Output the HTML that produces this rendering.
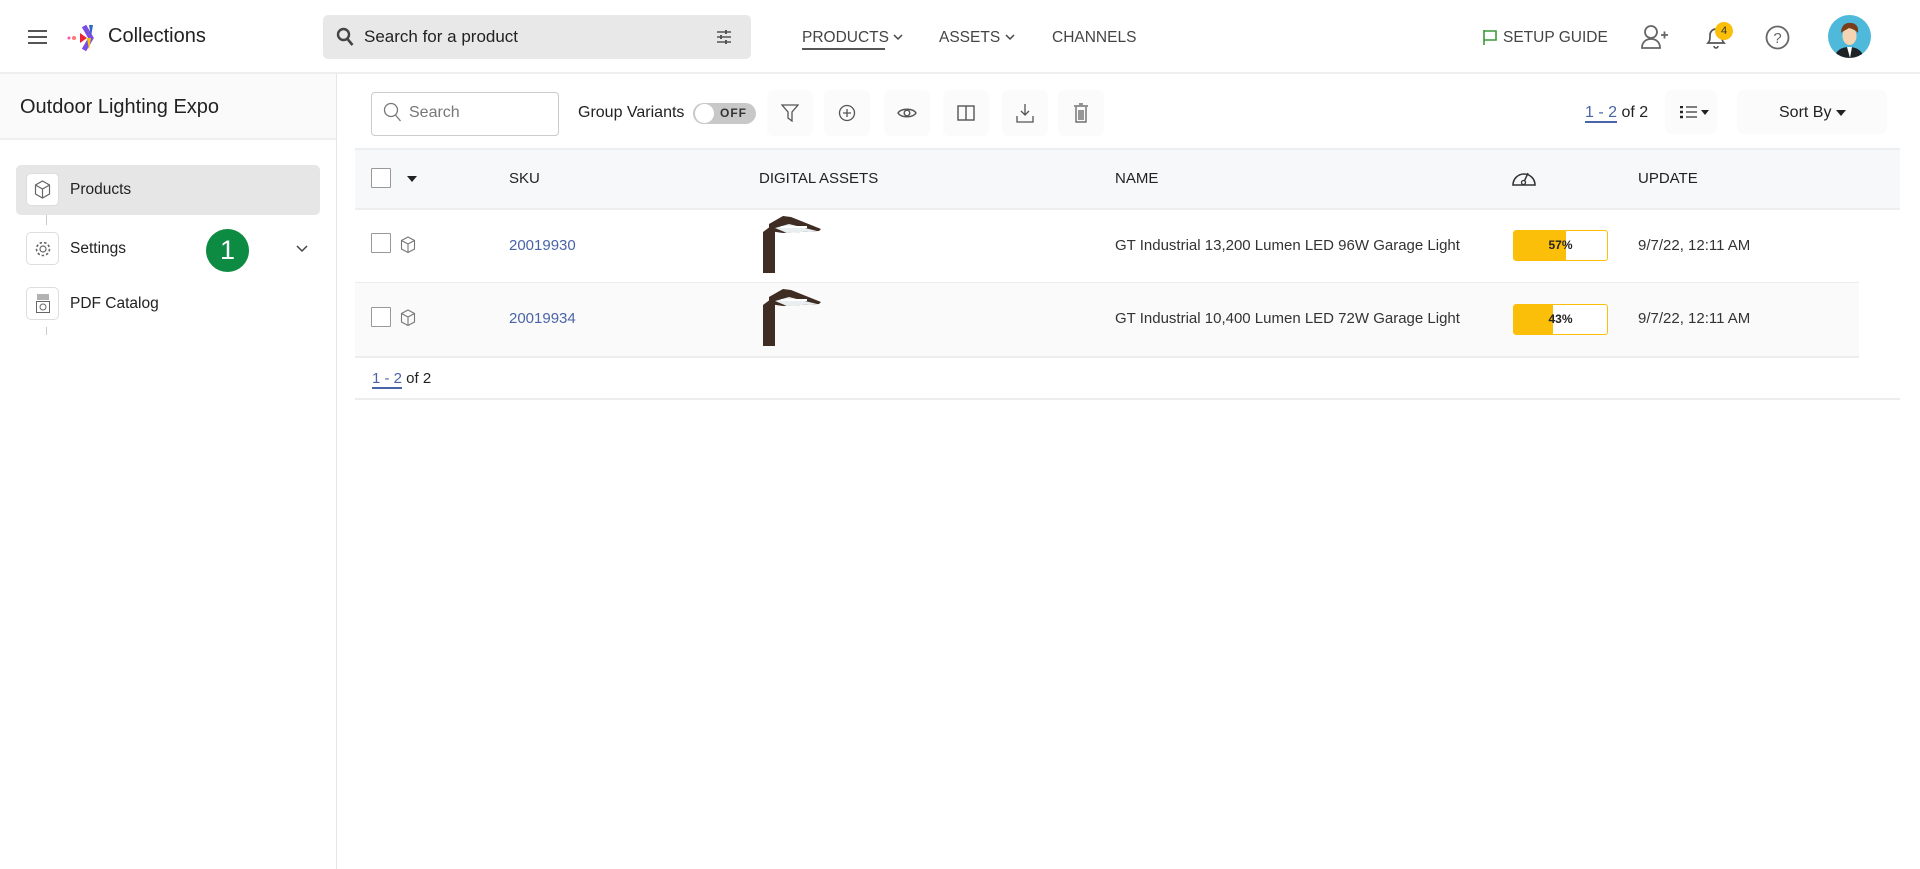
<!DOCTYPE html>
<html><head><meta charset="utf-8"><style>
*{box-sizing:border-box;margin:0;padding:0}
body{width:1920px;height:869px;overflow:hidden;background:#fff;font-family:"Liberation Sans",sans-serif;color:#222;position:relative}
.a{position:absolute}
.hdr{left:0;top:0;width:1920px;height:74px;border-bottom:2px solid #eef0f0}
.nav{font-size:15.5px;color:#444;top:29px}
.side{left:0;top:74px;width:337px;height:795px;border-right:1px solid #e6e6e6}
.ib{width:33px;height:33px;border:1px solid #ddd;border-radius:5px;background:#fff;display:flex;align-items:center;justify-content:center}
.si{font-size:15.5px;color:#222}
.tb{width:46px;height:46px;top:90px;background:#fbfbfb;border-radius:6px;display:flex;align-items:center;justify-content:center}
.th{font-size:15px;color:#222;top:170px}
.cb{width:20px;height:20px;border:1.5px solid #999;background:#fff;border-radius:1px}
.td{font-size:15px;color:#333}
.bar{width:95px;height:31px;border:1.5px solid #fbbf0a;border-radius:3px;background:#fff;overflow:hidden}
.bar i{position:absolute;left:0;top:0;bottom:0;background:#fbbf0a}
.bar b{position:absolute;left:0;right:0;top:0;line-height:28px;text-align:center;font-size:12px;color:#222}
</style></head><body>

<div class="a hdr"></div>
<svg class="a" style="left:28px;top:29px" width="19" height="16"><path d="M0 2h19M0 8h19M0 14h19" stroke="#555" stroke-width="2"/></svg>
<svg class="a" style="left:67px;top:23px" width="32" height="30" viewBox="0 0 32 30">
<circle cx="2" cy="15" r="1.5" fill="#f5a"/><circle cx="7" cy="15" r="2" fill="#f77"/>
<path d="M13 10 L20 15 L13 20Z" fill="#e23"/><path d="M17 3 L24 15 L17 27" stroke="#7b4de0" stroke-width="5" fill="none"/>
<path d="M20 15 L24 15 L22 27" fill="#f6c10f"/><path d="M22 2 L26 2 L24 14" fill="#36c"/></svg>
<div class="a" style="left:108px;top:25px;font-size:20px;color:#222">Collections</div>
<div class="a" style="left:323px;top:15px;width:428px;height:44px;background:#e8e8e8;border-radius:5px"></div>
<svg class="a" style="left:336px;top:27px" width="18" height="20"><circle cx="7.5" cy="7.5" r="5.5" stroke="#444" stroke-width="2.4" fill="none"/><path d="M11.5 12l5 6" stroke="#444" stroke-width="2.6"/></svg>
<div class="a" style="left:364px;top:27px;font-size:17px;color:#222">Search for a product</div>
<svg class="a" style="left:716px;top:29px" width="16" height="16"><path d="M1 3h14M1 8h14M1 13h14" stroke="#555" stroke-width="1.5"/><path d="M10 1v4M5 6v4M10 11v4" stroke="#555" stroke-width="2"/></svg>
<div class="a nav" style="left:802px">PRODUCTS</div>
<div class="a" style="left:802px;top:48px;width:83px;height:2px;background:#555"></div>
<svg class="a" style="left:893px;top:34px" width="10" height="7"><path d="M1 1l4 4 4-4" stroke="#444" stroke-width="1.5" fill="none"/></svg>
<div class="a nav" style="left:939px">ASSETS</div>
<svg class="a" style="left:1005px;top:34px" width="10" height="7"><path d="M1 1l4 4 4-4" stroke="#444" stroke-width="1.5" fill="none"/></svg>
<div class="a nav" style="left:1052px">CHANNELS</div>
<svg class="a" style="left:1482px;top:29px" width="16" height="17"><path d="M2 1v15M2 2h12v9H2" stroke="#3a9a3a" stroke-width="1.6" fill="none"/></svg>
<div class="a nav" style="left:1503px">SETUP GUIDE</div>
<svg class="a" style="left:1641px;top:24px" width="28" height="26"><circle cx="10" cy="8" r="6" stroke="#666" stroke-width="1.8" fill="none"/><path d="M1 24c0-6 4-9 9-9s9 3 9 9z" stroke="#666" stroke-width="1.8" fill="none"/><path d="M20 11h7M23.5 7.5v7" stroke="#666" stroke-width="1.8"/></svg>
<svg class="a" style="left:1704px;top:24px" width="24" height="26"><path d="M4 19c2-2 2-4 2-8a6 6 0 0112 0c0 4 0 6 2 8z" stroke="#555" stroke-width="1.7" fill="none"/><path d="M10 22a2 2 0 004 0" stroke="#555" stroke-width="1.6" fill="none"/></svg>
<div class="a" style="left:1715px;top:22px;width:18px;height:18px;border-radius:50%;background:#fbbf0a;font-size:11px;text-align:center;line-height:18px;color:#333">4</div>
<svg class="a" style="left:1765px;top:25px" width="25" height="25"><circle cx="12.5" cy="12.5" r="11" stroke="#666" stroke-width="1.8" fill="none"/><text x="12.5" y="18" font-size="15" text-anchor="middle" fill="#666" font-family="Liberation Sans">?</text></svg>
<svg class="a" style="left:1828px;top:15px" width="43" height="43"><defs><clipPath id="c"><circle cx="21.5" cy="21.5" r="21.5"/></clipPath></defs><g clip-path="url(#c)"><rect width="43" height="43" fill="#4fb9dc"/><path d="M6 43c2-8 8-11 15-11s13 3 15 11z" fill="#1e2326"/><path d="M19 32h5l-2 11z" fill="#fff"/><ellipse cx="21.5" cy="21" rx="7" ry="9" fill="#f5d4b3"/><path d="M13 18c0-8 5-11 10-10 5 0 8 4 7 10-2-3-6-4-9-5-3 2-6 3-8 5z" fill="#7a3d1c"/></g></svg>

<div class="a side"></div>
<div class="a" style="left:0;top:74px;width:337px;height:66px;background:#fafafa;border-bottom:2px solid #eee;border-right:1px solid #e6e6e6"></div>
<div class="a" style="left:20px;top:96px;font-size:20px;color:#222">Outdoor Lighting Expo</div>
<div class="a" style="left:16px;top:165px;width:304px;height:50px;background:#e6e6e6;border-radius:5px"></div>
<div class="a" style="left:46px;top:215px;width:1px;height:10px;background:#ccc"></div>
<div class="a" style="left:46px;top:327px;width:1px;height:8px;background:#ccc"></div>
<div class="a ib" style="left:26px;top:173px"><svg width="17" height="19"><path d="M8.5 1l7 4v9l-7 4-7-4V5zM1.5 5l7 4 7-4M8.5 9v9" stroke="#666" stroke-width="1.2" fill="none"/></svg></div>
<div class="a si" style="left:70px;top:181px">Products</div>
<div class="a ib" style="left:26px;top:232px"><svg width="18" height="18"><circle cx="9" cy="9" r="3" stroke="#666" stroke-width="1.2" fill="none"/><circle cx="9" cy="9" r="6.5" stroke="#666" stroke-width="1.6" stroke-dasharray="2.5 2" fill="none"/></svg></div>
<div class="a si" style="left:70px;top:240px">Settings</div>
<div class="a" style="left:206px;top:229px;width:43px;height:43px;border-radius:50%;background:#0d8b43;color:#fff;font-size:27px;text-align:center;line-height:43px">1</div>
<svg class="a" style="left:296px;top:245px" width="12" height="8"><path d="M1 1l5 5 5-5" stroke="#444" stroke-width="1.5" fill="none"/></svg>
<div class="a ib" style="left:26px;top:287px"><svg width="16" height="20"><path d="M2 1h12M2 3h12M2 5h12" stroke="#666" stroke-width="1"/><rect x="1.5" y="7.5" width="13" height="11" stroke="#666" fill="none"/><circle cx="8" cy="13" r="3" stroke="#666" fill="none"/></svg></div>
<div class="a si" style="left:70px;top:295px">PDF Catalog</div>

<div class="a" style="left:371px;top:92px;width:188px;height:44px;border:1.5px solid #ccc;border-radius:4px"></div>
<svg class="a" style="left:383px;top:102px" width="20" height="22"><circle cx="8" cy="8" r="6.5" stroke="#777" stroke-width="1.3" fill="none"/><path d="M12.5 13l5 6" stroke="#777" stroke-width="1.3"/></svg>
<div class="a" style="left:409px;top:104px;font-size:16px;color:#777">Search</div>
<div class="a" style="left:578px;top:104px;font-size:16px;color:#222">Group Variants</div>
<div class="a" style="left:693px;top:103px;width:63px;height:21px;border-radius:11px;background:#c8c8c8"></div>
<div class="a" style="left:695px;top:104px;width:19px;height:19px;border-radius:50%;background:#fff"></div>
<div class="a" style="left:720px;top:106px;font-size:12px;font-weight:bold;color:#333;letter-spacing:1px">OFF</div>
<div class="a tb" style="left:767px"><svg width="18" height="18"><path d="M1 1h16l-6 7v9l-4-3V8z" stroke="#555" stroke-width="1.3" fill="none"/></svg></div>
<div class="a tb" style="left:824px"><svg width="18" height="18"><circle cx="9" cy="9" r="7.5" stroke="#555" stroke-width="1.3" fill="none"/><path d="M9 5v8M5 9h8" stroke="#555" stroke-width="1.3"/></svg></div>
<div class="a tb" style="left:884px"><svg width="20" height="14"><path d="M1 7c3-5 15-5 18 0-3 5-15 5-18 0z" stroke="#555" stroke-width="1.4" fill="none"/><circle cx="10" cy="7" r="2.8" stroke="#555" stroke-width="1.4" fill="none"/></svg></div>
<div class="a tb" style="left:943px"><svg width="18" height="16"><rect x="1" y="1" width="16" height="14" stroke="#555" stroke-width="1.4" fill="none"/><path d="M9 1v14" stroke="#555" stroke-width="1.4"/></svg></div>
<div class="a tb" style="left:1002px"><svg width="18" height="20"><path d="M9 1v11M5 8l4 4 4-4M1 13v6h16v-6" stroke="#555" stroke-width="1.3" fill="none"/></svg></div>
<div class="a tb" style="left:1058px"><svg width="16" height="20"><path d="M1 3h14M6 1h4M3 4v15h10V4M6 7v10M8 7v10M10 7v10" stroke="#555" stroke-width="1.2" fill="none"/></svg></div>
<div class="a" style="left:1585px;top:104px;font-size:16px;color:#222"><span style="color:#4a64a8;border-bottom:2px solid #4a64a8">1 - 2</span> of 2</div>
<div class="a" style="left:1665px;top:90px;width:52px;height:44px;background:#fbfbfb;border-radius:6px"></div>
<svg class="a" style="left:1680px;top:106px" width="32" height="14"><path d="M0 1h3M0 6h3M0 11h3" stroke="#222" stroke-width="2.5"/><path d="M6 1h11M6 6h11M6 11h11" stroke="#555" stroke-width="1.6"/><path d="M21 4h8l-4 5z" fill="#222"/></svg>
<div class="a" style="left:1737px;top:90px;width:150px;height:44px;background:#fbfbfb;border-radius:6px"></div>
<div class="a" style="left:1779px;top:104px;font-size:16px;color:#222">Sort By</div>
<svg class="a" style="left:1836px;top:110px" width="10" height="6"><path d="M0 0h10l-5 6z" fill="#222"/></svg>

<div class="a" style="left:355px;top:148px;width:1545px;height:62px;background:#f7f8fa;border-top:2px solid #eceeef;border-bottom:2px solid #eceeef"></div>
<div class="a cb" style="left:371px;top:168px"></div>
<svg class="a" style="left:407px;top:176px" width="10" height="6"><path d="M0 0h10l-5 6z" fill="#222"/></svg>
<div class="a th" style="left:509px">SKU</div>
<div class="a th" style="left:759px">DIGITAL ASSETS</div>
<div class="a th" style="left:1115px">NAME</div>
<svg class="a" style="left:1511px;top:166px" width="26" height="22"><path d="M2 19a11 11 0 1122 0z" stroke="#333" stroke-width="1.6" fill="none"/><path d="M13 16l4-9" stroke="#333" stroke-width="1.5"/><circle cx="12.5" cy="16.5" r="2" stroke="#333" stroke-width="1.3" fill="#fff"/></svg>
<div class="a th" style="left:1638px">UPDATE</div>

<div class="a" style="left:355px;top:282px;width:1504px;height:1px;background:#ebedee"></div>
<div class="a" style="left:355px;top:283px;width:1504px;height:73px;background:#fafafa"></div>
<div class="a" style="left:355px;top:356px;width:1504px;height:2px;background:#ebedee"></div>
<div class="a" style="left:355px;top:398px;width:1545px;height:2px;background:#ebedee"></div>

<div class="a cb" style="left:371px;top:233px"></div>
<svg class="a" style="left:400px;top:236px" width="16" height="18"><path d="M8 1l6.5 3.5v8.5L8 16.5 1.5 13V4.5zM1.5 4.5L8 8l6.5-3.5M8 8v8.5" stroke="#777" stroke-width="1.1" fill="none"/></svg>
<div class="a td" style="left:509px;top:237px;color:#4a64a8">20019930</div>
<svg class="a" style="left:759px;top:214px" width="66" height="60"><path d="M4 59V18l8-6h4v47z" fill="#3f2c22"/><path d="M10 10l14-8 8 1 30 12-2 2-36 2-14-2z" fill="#3f2c22"/><path d="M16 14l14-4 28 7-30 2z" fill="#e9eef1"/><path d="M22 13h26" stroke="#fff" stroke-width="2"/></svg>
<div class="a td" style="left:1115px;top:237px">GT Industrial 13,200 Lumen LED 96W Garage Light</div>
<div class="a bar" style="left:1513px;top:230px"><i style="width:56%"></i><b>57%</b></div>
<div class="a td" style="left:1638px;top:237px">9/7/22, 12:11 AM</div>

<div class="a cb" style="left:371px;top:307px"></div>
<svg class="a" style="left:400px;top:309px" width="16" height="18"><path d="M8 1l6.5 3.5v8.5L8 16.5 1.5 13V4.5zM1.5 4.5L8 8l6.5-3.5M8 8v8.5" stroke="#777" stroke-width="1.1" fill="none"/></svg>
<div class="a td" style="left:509px;top:310px;color:#4a64a8">20019934</div>
<svg class="a" style="left:759px;top:287px" width="66" height="60"><path d="M4 59V18l8-6h4v47z" fill="#3f2c22"/><path d="M10 10l14-8 8 1 30 12-2 2-36 2-14-2z" fill="#3f2c22"/><path d="M16 14l14-4 28 7-30 2z" fill="#e9eef1"/><path d="M22 13h26" stroke="#fff" stroke-width="2"/></svg>
<div class="a td" style="left:1115px;top:310px">GT Industrial 10,400 Lumen LED 72W Garage Light</div>
<div class="a bar" style="left:1513px;top:304px"><i style="width:42%"></i><b>43%</b></div>
<div class="a td" style="left:1638px;top:310px">9/7/22, 12:11 AM</div>

<div class="a" style="left:372px;top:370px;font-size:15px;color:#222"><span style="color:#4a64a8;border-bottom:2px solid #4a64a8">1 - 2</span> of 2</div>
</body></html>
